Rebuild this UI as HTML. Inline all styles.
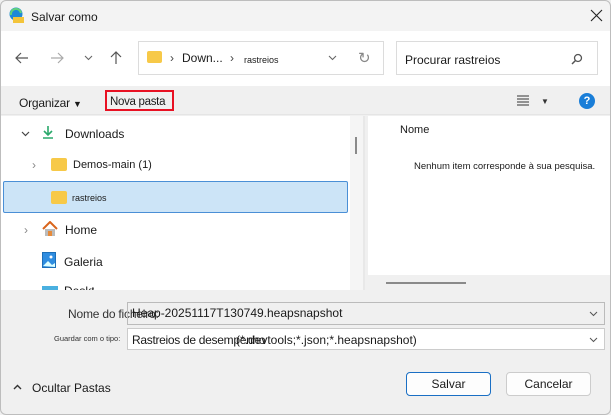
<!DOCTYPE html>
<html><head><style>
*{margin:0;padding:0;box-sizing:border-box}
body{width:611px;height:415px;background:#f0f0f0;font-family:"Liberation Sans",sans-serif;font-size:12px;color:#1a1a1a;position:relative;overflow:hidden}
.a{position:absolute;white-space:nowrap}
</style></head><body>
<div class="a" style="left:1px;top:1px;width:609px;height:30px;background:#f3f3f3"></div>
<svg class="a" style="left:8px;top:7px" width="17" height="17"><circle cx="8" cy="7" r="6.5" fill="#1e88d6"/><path d="M3 8a5 5 0 0 1 10-2" stroke="#5fd17c" stroke-width="2" fill="none"/><rect x="5" y="10" width="11" height="6" fill="#f3c43a"/></svg>
<div class="a" style="left:31px;top:10px;font-size:12px">Salvar como</div>
<svg class="a" style="left:590px;top:9px" width="13" height="13"><path d="M1 1L12 12M12 1L1 12" stroke="#222" stroke-width="1.1"/></svg>
<div class="a" style="left:1px;top:31px;width:609px;height:55px;background:#fff"></div>
<svg class="a" style="left:15px;top:52px" width="14" height="12"><path d="M13 6H1M6 1L1 6l5 5" stroke="#555" stroke-width="1.2" fill="none"/></svg>
<svg class="a" style="left:50px;top:52px" width="14" height="12"><path d="M1 6h12M8 1l5 5-5 5" stroke="#aaa" stroke-width="1.2" fill="none"/></svg>
<svg class="a" style="left:84px;top:55px" width="9" height="6"><path d="M1 1l3.5 3.5L8 1" stroke="#666" stroke-width="1.1" fill="none"/></svg>
<svg class="a" style="left:110px;top:51px" width="12" height="14"><path d="M6 13V1M1 6l5-5 5 5" stroke="#555" stroke-width="1.2" fill="none"/></svg>
<div class="a" style="left:138px;top:41px;width:246px;height:34px;border:1px solid #dcdcdc"></div>
<div class="a" style="left:147px;top:51px;width:15px;height:12px;background:#f7c948;border-radius:2px"></div>
<div class="a" style="left:170px;top:51px;font-size:12px;color:#444">›</div>
<div class="a" style="left:182px;top:51px;font-size:12px">Down...</div>
<div class="a" style="left:230px;top:51px;font-size:12px;color:#444">›</div>
<div class="a" style="left:244px;top:55px;font-size:9px">rastreios</div>
<svg class="a" style="left:328px;top:55px" width="9" height="6"><path d="M1 1l3.5 3.5L8 1" stroke="#666" stroke-width="1.1" fill="none"/></svg>
<div class="a" style="left:358px;top:49px;font-size:15px;color:#888">↻</div>
<div class="a" style="left:396px;top:41px;width:202px;height:34px;border:1px solid #dcdcdc"></div>
<div class="a" style="left:405px;top:53px;font-size:12px">Procurar rastreios</div>
<svg class="a" style="left:571px;top:53px" width="12" height="12"><circle cx="7" cy="5" r="3.5" stroke="#555" fill="none" stroke-width="1.3"/><path d="M4.5 7.5L1 11" stroke="#555" stroke-width="1.5"/></svg>
<div class="a" style="left:1px;top:86px;width:609px;height:29px;background:#f0f0f0;border-bottom:1px solid #e5e5e5"></div>
<div class="a" style="left:19px;top:96px;font-size:12px;letter-spacing:-0.2px">Organizar <span style="font-size:9px">▼</span></div>
<div class="a" style="left:105px;top:90px;width:69px;height:21px;border:2px solid #e81123"></div>
<div class="a" style="left:110px;top:96px;font-size:11.5px;letter-spacing:-0.3px">Nova pasta</div>
<svg class="a" style="left:517px;top:95px" width="12" height="11"><path d="M0 1h12M0 4h12M0 7h12M0 10h12" stroke="#333" stroke-width="1"/></svg>
<div class="a" style="left:541px;top:97px;font-size:8px;color:#333">▼</div>
<div class="a" style="left:579px;top:93px;width:16px;height:16px;border-radius:50%;background:#1a7ed8;color:#fff;font-size:11px;font-weight:bold;text-align:center;line-height:16px">?</div>
<div class="a" style="left:1px;top:116px;width:349px;height:174px;background:#fff"></div>
<div class="a" style="left:350px;top:116px;width:15px;height:174px;background:#f5f5f5;border-right:2px solid #e8e8e8"></div>
<div class="a" style="left:355px;top:137px;width:2px;height:17px;background:#8a8a8a"></div>
<svg class="a" style="left:21px;top:131px" width="9" height="6"><path d="M1 1l3.5 3.5L8 1" stroke="#444" stroke-width="1.2" fill="none"/></svg>
<svg class="a" style="left:42px;top:125px" width="12" height="14"><path d="M6 1v9M2 6l4 4 4-4M1 13h10" stroke="#2aa86b" stroke-width="1.6" fill="none"/></svg>
<div class="a" style="left:65px;top:127px;font-size:12px">Downloads</div>
<div class="a" style="left:32px;top:158px;font-size:12px;color:#888">›</div>
<div class="a" style="left:51px;top:158px;width:16px;height:13px;background:#f7c948;border-radius:2px"></div>
<div class="a" style="left:73px;top:159px;font-size:11px">Demos-main (1)</div>
<div class="a" style="left:3px;top:181px;width:345px;height:32px;background:#cce4f7;border:1px solid #4a8fd6;border-radius:2px"></div>
<div class="a" style="left:51px;top:191px;width:16px;height:13px;background:#f7c948;border-radius:2px"></div>
<div class="a" style="left:72px;top:193px;font-size:9px">rastreios</div>
<div class="a" style="left:24px;top:223px;font-size:12px;color:#888">›</div>
<svg class="a" style="left:42px;top:221px" width="16" height="16"><path d="M1 8L8 1l7 7" stroke="#d9651c" stroke-width="2" fill="none"/><path d="M3 8v7h10V8" fill="#bbb"/><rect x="6" y="10" width="4" height="5" fill="#e68a3a"/></svg>
<div class="a" style="left:65px;top:223px;font-size:12px">Home</div>
<svg class="a" style="left:42px;top:252px" width="16" height="17"><rect x="0.5" y="0.5" width="13" height="15" fill="#2f8de0" stroke="#1c6fb8"/><path d="M1 14l5-5 4 4 3-2v4z" fill="#dff"/><circle cx="9" cy="5" r="1.5" fill="#fff"/></svg>
<div class="a" style="left:64px;top:255px;font-size:12px">Galeria</div>
<div class="a" style="left:42px;top:286px;width:16px;height:4px;background:#4ab0e0"></div>
<div class="a" style="left:64px;top:286px;width:30px;height:4px;overflow:hidden"><div style="font-size:12px;margin-top:-2px">Desktop</div></div>
<div class="a" style="left:368px;top:116px;width:242px;height:159px;background:#fff"></div>
<div class="a" style="left:368px;top:275px;width:242px;height:15px;background:#f0f0f0"></div>
<div class="a" style="left:386px;top:282px;width:80px;height:2px;background:#8a8a8a"></div>
<div class="a" style="left:400px;top:124px;font-size:11px">Nome</div>
<div class="a" style="left:414px;top:161px;font-size:9.5px">Nenhum item corresponde à sua pesquisa.</div>
<div class="a" style="left:68px;top:307px;font-size:12px;color:#333;letter-spacing:-0.2px">Nome do ficheiro:</div>
<div class="a" style="left:127px;top:302px;width:478px;height:23px;border:1px solid #bbb"></div>
<div class="a" style="left:132px;top:306px;font-size:12px">Heap-20251117T130749.heapsnapshot</div>
<svg class="a" style="left:589px;top:311px" width="9" height="6"><path d="M1 1l3.5 3.5L8 1" stroke="#555" stroke-width="1" fill="none"/></svg>
<div class="a" style="left:54px;top:334px;font-size:7.5px;color:#333">Guardar com o tipo:</div>
<div class="a" style="left:127px;top:328px;width:478px;height:22px;background:#fff;border:1px solid #ccc"></div>
<div class="a" style="left:132px;top:333px;font-size:12px;letter-spacing:-0.3px">Rastreios de desempenho</div>
<div class="a" style="left:236px;top:333px;font-size:12px">(*.devtools;*.json;*.heapsnapshot)</div>
<svg class="a" style="left:589px;top:337px" width="9" height="6"><path d="M1 1l3.5 3.5L8 1" stroke="#555" stroke-width="1" fill="none"/></svg>
<svg class="a" style="left:13px;top:384px" width="9" height="6"><path d="M1 5l3.5-3.5L8 5" stroke="#333" stroke-width="1.4" fill="none"/></svg>
<div class="a" style="left:32px;top:381px;font-size:12px">Ocultar Pastas</div>
<div class="a" style="left:406px;top:372px;width:85px;height:24px;background:#fdfdfd;border:1px solid #1a6fc4;border-radius:4px;text-align:center;line-height:22px;font-size:12px">Salvar</div>
<div class="a" style="left:506px;top:372px;width:85px;height:24px;background:#fdfdfd;border:1px solid #ccc;border-radius:4px;text-align:center;line-height:22px;font-size:12px">Cancelar</div>
<div class="a" style="left:0;top:0;width:611px;height:415px;border:1px solid #bdbdbd;border-radius:6px;"></div>
</body></html>
